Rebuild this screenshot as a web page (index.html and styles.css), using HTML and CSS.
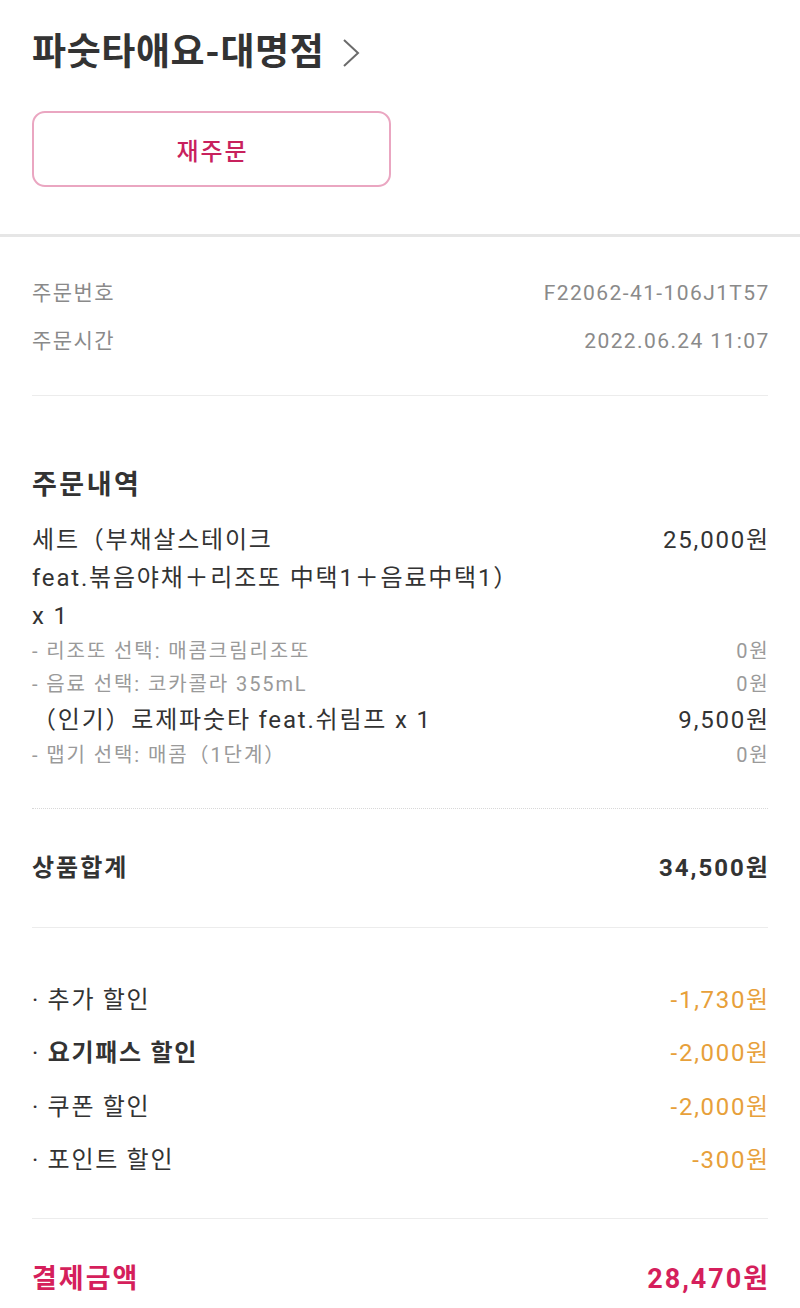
FILE: index.html
```html
<!DOCTYPE html>
<html lang="ko">
<head>
<meta charset="utf-8">
<link rel="stylesheet" href="styles.css">
</head>
<body>
<div class="page">
  <header class="top">
    <div class="store">
      <h1 class="store-name">파숫타애요-대명점</h1>
      <svg class="chev" width="20" height="32" viewBox="0 0 20 32"><polyline points="3,3 17,16 3,29" fill="none" stroke="#6b6b6b" stroke-width="2"/></svg>
    </div>
    <button class="reorder">재주문</button>
  </header>
  <div class="thick-sep"></div>

  <section class="info">
    <div class="info-row"><span>주문번호</span><span class="r">F22062-41-106J1T57</span></div>
    <div class="info-row"><span>주문시간</span><span class="r">2022.06.24 11:07</span></div>
  </section>
  <div class="sep"></div>

  <section class="order">
    <h2 class="order-title">주문내역</h2>
    <div class="item">
      <div class="item-name">세트（부채살스테이크<br>feat.볶음야채＋리조또 中택1＋음료中택1）<br>x 1</div>
      <div class="item-price r">25,000원</div>
    </div>
    <div class="opt"><span>- 리조또 선택: 매콤크림리조또</span><span class="r">0원</span></div>
    <div class="opt"><span>- 음료 선택: 코카콜라 355mL</span><span class="r">0원</span></div>
    <div class="item">
      <div class="item-name">（인기）로제파숫타 feat.쉬림프 x 1</div>
      <div class="item-price r">9,500원</div>
    </div>
    <div class="opt"><span>- 맵기 선택: 매콤（1단계）</span><span class="r">0원</span></div>
  </section>
  <div class="dot-sep"></div>

  <section class="subtotal">
    <span>상품합계</span><span class="r">34,500원</span>
  </section>
  <div class="sep"></div>

  <section class="discounts">
    <div class="disc"><span>· 추가 할인</span><span class="minus r">-1,730원</span></div>
    <div class="disc"><span>· <b>요기패스 할인</b></span><span class="minus r">-2,000원</span></div>
    <div class="disc"><span>· 쿠폰 할인</span><span class="minus r">-2,000원</span></div>
    <div class="disc"><span>· 포인트 할인</span><span class="minus r">-300원</span></div>
  </section>
  <div class="sep"></div>

  <section class="total">
    <span>결제금액</span><span class="r">28,470원</span>
  </section>
</div>
</body>
</html>
```

FILE: styles.css
```css
* { box-sizing: border-box; margin: 0; padding: 0; }
html, body { background: #fff; }
body {
  font-family: Roboto, "Noto Sans CJK KR", sans-serif;
  color: #333;
}
.page { width: 800px; }
.r { margin-right: -0.08em; }

.top { padding: 30px 32px 47px; }
.store { display: flex; align-items: center; height: 46px; }
.store-name {
  font-size: 37px;
  font-weight: 700;
  color: #333;
  line-height: 46px;
  letter-spacing: 0.6px;
}
.chev { margin-left: 17px; }
.reorder {
  display: block;
  margin-top: 35px;
  width: 359px;
  height: 76px;
  border: 2px solid #eaa6c1;
  border-radius: 13px;
  background: #fff;
  color: #c8215d;
  font-family: Roboto, "Noto Sans CJK KR", sans-serif;
  font-size: 24px;
  font-weight: 500;
  letter-spacing: 2px;
  text-indent: 2px;
}
.thick-sep { height: 3px; background: #e6e6e6; }

.info { padding: 32px 32px 30px; }
.info-row {
  display: flex;
  justify-content: space-between;
  line-height: 48px;
  font-size: 21px;
  letter-spacing: 1.4px;
  color: #8a8a8a;
}

.sep { height: 1px; background: #ececec; margin: 0 32px; }
.dot-sep { margin: 36px 32px 0; border-top: 1px dotted #d8d8d8; }

.order { padding: 69px 32px 0; }
.order-title {
  font-size: 27px;
  font-weight: 700;
  line-height: 40px;
  letter-spacing: 2.5px;
  margin-bottom: 16px;
  color: #333;
}
.item {
  display: flex;
  justify-content: space-between;
  font-size: 24px;
  line-height: 38px;
  letter-spacing: 1.8px;
  color: #333;
}
.opt {
  display: flex;
  justify-content: space-between;
  font-size: 20px;
  line-height: 33px;
  letter-spacing: 1.9px;
  color: #9a9a9a;
}

.subtotal {
  display: flex;
  justify-content: space-between;
  padding: 39px 32px 39px;
  line-height: 40px;
  font-size: 24px;
  font-weight: 700;
  letter-spacing: 2px;
  color: #333;
}

.discounts { padding: 46px 32px 31px; }
.disc {
  display: flex;
  justify-content: space-between;
  line-height: 53.33px;
  font-size: 24px;
  letter-spacing: 1.7px;
  color: #333;
}
.disc b { font-weight: 700; }
.minus { color: #e7a03a; }

.total {
  display: flex;
  justify-content: space-between;
  padding: 40px 32px 0;
  line-height: 40px;
  font-size: 27px;
  font-weight: 700;
  letter-spacing: 2px;
  color: #d51f5c;
}
```
